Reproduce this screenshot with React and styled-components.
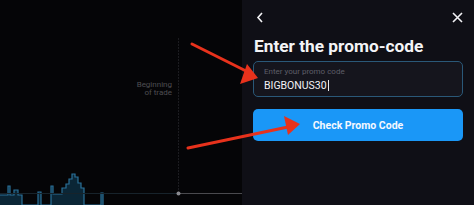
import React from 'react';
import styled, { createGlobalStyle } from 'styled-components';

const GlobalStyle = createGlobalStyle`
    html, body {
        margin: 0;
        padding: 0;
        background: #050507;
        font-family: Roboto, "Liberation Sans", sans-serif;
    }
`;

const Page = styled.div`
    position: relative;
    width: 474px;
    height: 205px;
    display: flex;
    overflow: hidden;
`;

const ChartArea = styled.div`
    width: 242px;
    height: 205px;
    background: #050507;
    position: relative;
    flex: none;
`;

const ChartSvg = styled.svg`
    display: block;
`;

const TradeLabel = styled.div`
    position: absolute;
    top: 81px;
    right: 70px;
    text-align: right;
    font-size: 8px;
    line-height: 8px;
    color: #4e4e52;
`;

const Panel = styled.div`
    flex: 1;
    background: #0f0f16;
    padding: 11px 11px 0 11px;
    display: flex;
    flex-direction: column;
`;

const Header = styled.div`
    display: flex;
    justify-content: space-between;
    align-items: center;
    height: 13px;
    padding: 0 0 0 1px;
`;

const IconButton = styled.button`
    background: none;
    border: 0;
    padding: 0;
    width: 12px;
    height: 12px;
    display: flex;
    align-items: center;
    justify-content: center;
    color: #f2f2f5;
`;

const Title = styled.h1`
    margin: 12px 0 0 1px;
    font-size: 17.3px;
    line-height: 20px;
    font-weight: 700;
    color: #f4f4f6;
    letter-spacing: 0;
`;

const InputBox = styled.div`
    margin-top: 5px;
    height: 36px;
    box-sizing: border-box;
    border: 1px solid #2a5878;
    border-radius: 5px;
    background: #15151d;
    padding: 5px 10px 0 10px;
`;

const InputLabel = styled.div`
    font-size: 8px;
    line-height: 9px;
    color: #5d5e68;
`;

const InputValue = styled.div`
    margin-top: 3px;
    font-size: 10.5px;
    line-height: 13px;
    color: #f2f2f5;
    display: flex;
    align-items: center;
`;

const Caret = styled.span`
    display: inline-block;
    width: 1px;
    height: 11px;
    background: #e8e8ec;
    margin-left: 1px;
`;

const PrimaryButton = styled.button`
    margin-top: 12px;
    height: 32px;
    border: 0;
    border-radius: 5px;
    background: #1a97f7;
    color: #f4f8ff;
    font-family: Roboto, "Liberation Sans", sans-serif;
    font-size: 10.5px;
    font-weight: 700;
`;

const Overlay = styled.svg`
    position: absolute;
    left: 0;
    top: 0;
    pointer-events: none;
`;

function Chart() {
    const line =
        '0,195 8,195 8,186 10,186 10,195 14,195 14,190 18,190 18,195 22,195 22,205 38,205 38,192 41,192 41,205 51,205 51,186 53,186 53,194 62,194 62,188 66,188 66,184 69,184 69,179 72,179 72,174 75,174 75,177 78,177 78,183 81,183 81,188 84,188 84,205 101,205 101,193 103,193 103,205';
    return (
        <ChartSvg width="242" height="205">
            <polygon points={`${line} 103,205 0,205`} fill="#0c2a3c" opacity="0.9" />
            <polyline points={line} fill="none" stroke="#2a7199" strokeWidth="1.2" />
            <line x1="0" y1="193.5" x2="178" y2="193.5" stroke="#17232b" strokeWidth="1" />
            <line x1="178" y1="193.5" x2="242" y2="193.5" stroke="#4a4a4e" strokeWidth="1" />
            <line x1="178.5" y1="38" x2="178.5" y2="193" stroke="#1c1c20" strokeWidth="1" strokeDasharray="2 1" />
            <circle cx="178.5" cy="193.5" r="2" fill="#8a8a90" />
        </ChartSvg>
    );
}

function Arrows() {
    return (
        <Overlay width="474" height="205">
            <line x1="192" y1="44" x2="246" y2="71" stroke="#e8321c" strokeWidth="3" strokeLinecap="round" />
            <polygon points="258,78 240,84 247,64" fill="#e8321c" />
            <line x1="188" y1="148" x2="288" y2="127" stroke="#e8321c" strokeWidth="3" strokeLinecap="round" />
            <polygon points="300,124 284,116 288,135" fill="#e8321c" />
        </Overlay>
    );
}

export default function App() {
    return (
        <>
            <GlobalStyle />
            <Page>
                <ChartArea>
                    <Chart />
                    <TradeLabel>
                        Beginning
                        <br />
                        of trade
                    </TradeLabel>
                </ChartArea>
                <Panel>
                    <Header>
                        <IconButton>
                            <svg width="8" height="11" viewBox="0 0 8 11">
                                <path d="M6 1 L2 5.5 L6 10" fill="none" stroke="currentColor" strokeWidth="1.6" />
                            </svg>
                        </IconButton>
                        <IconButton>
                            <svg width="11" height="11" viewBox="0 0 11 11">
                                <path d="M1 1 L10 10 M10 1 L1 10" fill="none" stroke="currentColor" strokeWidth="1.6" />
                            </svg>
                        </IconButton>
                    </Header>
                    <Title>Enter the promo-code</Title>
                    <InputBox>
                        <InputLabel>Enter your promo code</InputLabel>
                        <InputValue>
                            BIGBONUS30
                            <Caret />
                        </InputValue>
                    </InputBox>
                    <PrimaryButton>Check Promo Code</PrimaryButton>
                </Panel>
                <Arrows />
            </Page>
        </>
    );
}
